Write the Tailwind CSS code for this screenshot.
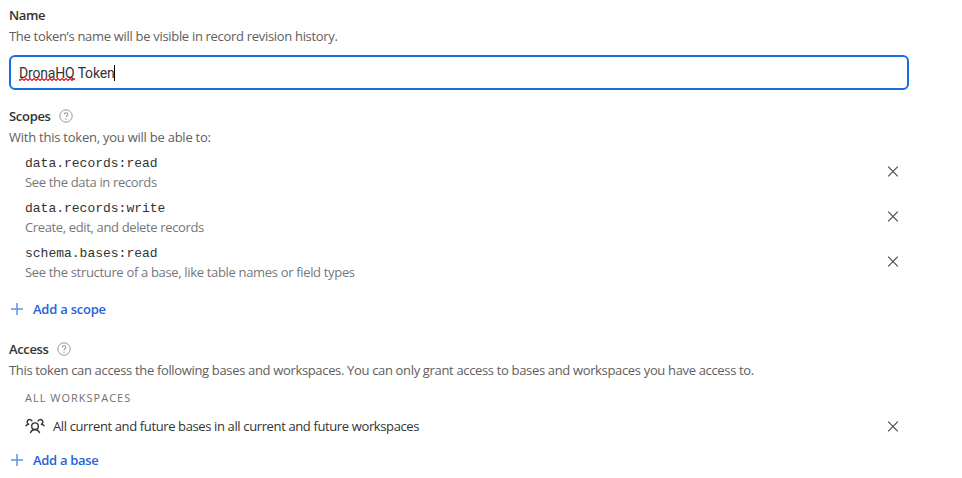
<!DOCTYPE html>
<html lang="en">
<head>
<meta charset="utf-8">
<title>Create token</title>
<script src="https://cdn.jsdelivr.net/npm/@tailwindcss/browser@4"></script>
</head>
<body class="h-[478px] overflow-hidden bg-white font-['Open_Sans',sans-serif] text-[13px] leading-5 text-[#333] whitespace-nowrap">
<svg class="absolute size-0">
  <symbol id="x" viewBox="0 0 12 12"><path d="M1.200 .7l9.600 9.600M10.800 .7L1.200 10.300" fill="none" stroke="currentColor" stroke-width="1.1"/></symbol>
  <symbol id="plus" viewBox="0 0 12 12"><path d="M6 0v12M0 6h12" fill="none" stroke="currentColor" stroke-width="1.500"/></symbol>
  <symbol id="help" viewBox="0 0 14 14"><g fill="none" stroke="currentColor"><circle cx="7" cy="7" r="6.2" stroke-width="1"/><path d="M5.2 5.5c0-2.3 3.6-2.2 3.6 0C8.800 6.800 7 6.700 7 8.300" stroke-width="1.1"/><path d="M7 9.500v1.200" stroke-width="1.200"/></g></symbol>
  <symbol id="people" viewBox="0 0 20 16"><g fill="none" stroke="currentColor" stroke-width="1.400" stroke-linecap="round" stroke-linejoin="round"><circle cx="10" cy="8.200" r="3.300"/><path d="M5.500 14.500C6.400 12.700 8 11.500 10 11.500s3.600 1.200 4.500 3M1 7.800C1.600 7.100 2.500 6.400 3.600 6.300M3.600 6.300A2.500 2.500 0 1 1 6.900 2.900M19 7.800C18.400 7.100 17.500 6.400 16.400 6.300M16.400 6.300A2.500 2.500 0 1 0 13.100 2.900"/></g></symbol>
  <pattern id="wave" width="4" height="3" patternUnits="userSpaceOnUse"><path d="M-1 .5L1 2.500L3 .5L5 2.500" fill="none" stroke="#f01020" stroke-width="1.2"/></pattern>
</svg>
<main class="ml-[9px] flex w-[900px] flex-col pt-[5px]">
  <label for="token-name" class="font-semibold tracking-[-0.4px]">Name</label>
  <p class="mt-px text-[#606060]"><span class="tracking-[-0.31px]">The token’s name will be visible in record revision history.</span></p>
  <div id="token-name" class="mt-[9px] flex h-[35px] items-center rounded-md border-2 border-[#166ee1] pl-2 font-[Roboto,sans-serif] text-sm tracking-[-0.2px]">
    <span class="relative">DronaHQ<svg class="absolute left-0 top-[15px] h-[3px] w-14"><rect width="56" height="3" fill="url(#wave)"/></svg></span><span>&nbsp;Token</span><span class="h-4 w-px bg-black"></span>
  </div>
  <div class="mt-4 flex items-center gap-2"><h2 class="font-semibold tracking-[-0.3px]">Scopes</h2><svg class="size-3.5 text-[#999]"><use href="#help"/></svg></div>
  <p class="mt-px text-[#606060]"><span class="tracking-[-0.24px]">With this token, you will be able to:</span></p>
  <ul class="mt-[5px] flex flex-col gap-[5px] pl-4 pr-[10px]">
    <li class="flex h-10 items-center justify-between"><div><div class="pt-0.5 leading-[18px] font-['Liberation_Mono',monospace]"><div class="h-[18px] leading-5">data.records:read</div></div><div class="text-[#777]"><span class="tracking-[-0.34px]">See the data in records</span></div></div><svg class="size-3 text-[#444]"><use href="#x"/></svg></li>
    <li class="flex h-10 items-center justify-between"><div><div class="pt-0.5 leading-[18px] font-['Liberation_Mono',monospace]"><div class="h-[18px] leading-5">data.records:write</div></div><div class="text-[#777]"><span class="tracking-[-0.36px]">Create, edit, and delete records</span></div></div><svg class="size-3 text-[#444]"><use href="#x"/></svg></li>
    <li class="flex h-10 items-center justify-between"><div><div class="pt-0.5 leading-[18px] font-['Liberation_Mono',monospace]"><div class="h-[18px] leading-5">schema.bases:read</div></div><div class="text-[#777]"><span class="tracking-[-0.33px]">See the structure of a base, like table names or field types</span></div></div><svg class="size-3 text-[#444]"><use href="#x"/></svg></li>
  </ul>
  <div class="mt-[17px] flex items-center gap-2.5 pl-0.5 font-semibold text-[#2563d9]"><svg class="size-3 text-[#5b96e8]"><use href="#plus"/></svg><span class="tracking-[-0.24px]">Add a scope</span></div>
  <div class="mt-5 flex items-center gap-2"><h2 class="font-semibold tracking-[-0.36px]">Access</h2><svg class="size-3.5 text-[#999]"><use href="#help"/></svg></div>
  <p class="mt-px text-[#606060]"><span class="tracking-[-0.34px]">This token can access the following bases and workspaces. You can only grant access to bases and workspaces you have access to.</span></p>
  <h3 class="mt-2 pl-4 text-[11px] leading-5 text-[#707070]"><span class="tracking-[1px]">ALL WORKSPACES</span></h3>
  <div class="mt-2 flex h-5 items-center pl-4 pr-[10px]"><svg class="mr-2 h-4 w-5 text-[#333]"><use href="#people"/></svg><span class="tracking-[-0.375px]">All current and future bases in all current and future workspaces</span><svg class="ml-auto mt-0.5 size-3 text-[#444]"><use href="#x"/></svg></div>
  <div class="mt-3.5 flex items-center gap-2.5 pl-0.5 font-semibold text-[#2563d9]"><svg class="size-3 text-[#5b96e8]"><use href="#plus"/></svg><span class="tracking-[-0.3px]">Add a base</span></div>
</main>
</body>
</html>
